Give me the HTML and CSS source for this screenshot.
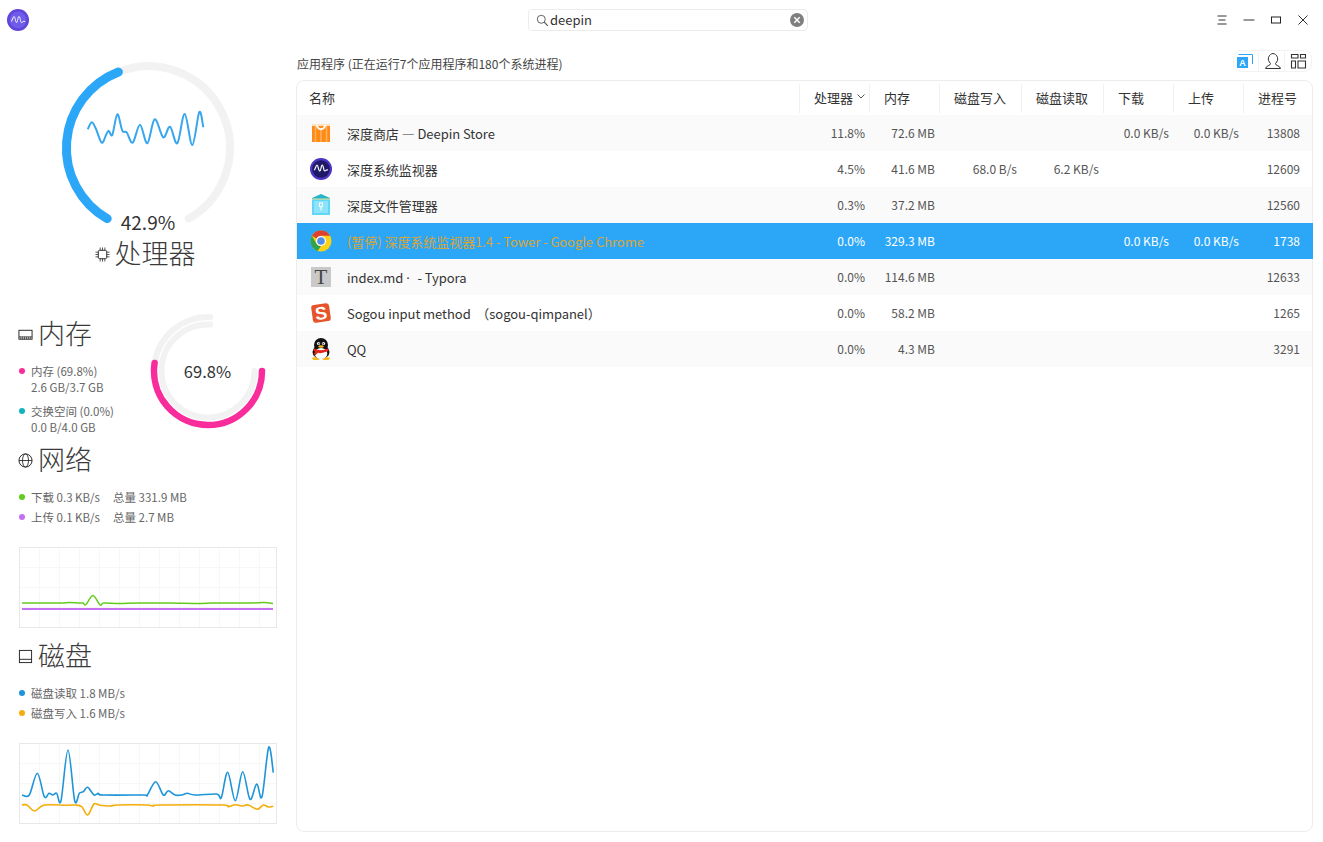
FILE: index.html
```html
<!DOCTYPE html>
<html lang="zh-CN">

<head>
    <meta charset="UTF-8">
    <meta name="viewport" content="width=device-width, initial-scale=1.0">
    <title>深度系统监视器</title>
    <link rel="stylesheet" href="styles.css">
</head>

<body>
    <header class="titlebar">
        <div class="titlebar-left">
            <svg class="app-logo" viewBox="0 0 22 22">
                <circle cx="11" cy="11" r="11" fill="#5f45dc" />
                <circle cx="11" cy="11" r="8.400" fill="#6f5ce8" />
                <path d="M4 12.500c1.500 0 1.700-5 3-5s1.400 6 2.600 6 1-6 2.400-6 1.200 6 2.500 6 1.400-2 3.500-1" fill="none" stroke="#fff" stroke-width="1" />
            </svg>
        </div>
        <div class="search-box">
            <svg class="search-icon" viewBox="0 0 14 14">
                <circle cx="5.700" cy="5.700" r="4.300" fill="none" stroke="#555" stroke-width="1" />
                <path d="M8.800 8.800l4 4" stroke="#555" stroke-width="1.200" />
            </svg>
            <span class="search-text">deepin</span>
            <svg class="search-clear" viewBox="0 0 14 14">
                <circle cx="7" cy="7" r="7" fill="#7f7f7f" />
                <path d="M4.300 4.300l5.400 5.400M9.700 4.300l-5.400 5.400" stroke="#fff" stroke-width="1.500" />
            </svg>
        </div>
        <div class="window-buttons">
            <svg class="win-btn" viewBox="0 0 12 12"><path d="M1.500 2h9M2.500 6h7M1.500 10h9" stroke="#333" stroke-width="1" fill="none" /></svg>
            <svg class="win-btn" viewBox="0 0 12 12"><path d="M0.500 6h11" stroke="#333" stroke-width="1" fill="none" /></svg>
            <svg class="win-btn" viewBox="0 0 12 12"><rect x="1.500" y="3" width="9" height="6" stroke="#222" stroke-width="1" fill="none" /></svg>
            <svg class="win-btn" viewBox="0 0 12 12"><path d="M1.500 1.500l9 9M10.500 1.500l-9 9" stroke="#333" stroke-width="1" fill="none" /></svg>
        </div>
    </header>

    <div class="main">
        <aside class="sidebar">
            <section class="cpu">
                <div class="cpu-gauge">
                    <svg class="cpu-svg" viewBox="0 50 296 180">
                        <path d="M118.400 72A81.500 81.500 0 0 1 188.750 218.600" fill="none" stroke="#f2f2f2" stroke-width="8" stroke-linecap="round" />
                        <path d="M107.250 218.600A81.500 81.500 0 0 1 118.400 72" fill="none" stroke="#2ca7f8" stroke-width="9" stroke-linecap="round" />
                        <path id="cpu-wave" fill="none" stroke="#38a6ee" stroke-width="2" />
                    </svg>
                    <div class="cpu-value">42.9%</div>
                </div>
                <h2 class="section-title cpu-title">
                    <svg class="title-icon" viewBox="0 0 16 16">
                        <rect x="3.500" y="3.500" width="9" height="9" rx="1.500" fill="none" stroke="#222" stroke-width="1" />
                        <path d="M0.500 5.500h3M0.500 8h3M0.500 10.500h3M12.500 5.500h3M12.500 8h3M12.500 10.500h3M5.500 0.500v3M8 0.500v3M10.500 0.500v3M5.500 12.500v3M8 12.500v3M10.500 12.500v3" stroke="#222" stroke-width="0.800" />
                    </svg>
                    <span>处理器</span>
                </h2>
            </section>

            <section class="memory">
                <div class="memory-info">
                    <h2 class="section-title">
                        <svg class="title-icon" viewBox="0 0 16 16">
                            <rect x="1" y="3.500" width="14" height="9.500" fill="none" stroke="#222" stroke-width="1" />
                            <path d="M1 10.500h14M3 10.500v2.500M5 10.500v2.500M7 10.500v2.500M9 10.500v2.500M11 10.500v2.500M13 10.500v2.500" stroke="#222" stroke-width="0.800" />
                        </svg>
                        <span>内存</span>
                    </h2>
                    <ul class="legend memory-legend">
                        <li><i class="dot dot-pink"></i><span>内存 (69.8%)<br>2.6 GB/3.7 GB</span></li>
                        <li><i class="dot dot-teal"></i><span>交换空间 (0.0%)<br>0.0 B/4.0 GB</span></li>
                    </ul>
                </div>
                <div class="memory-gauge">
                    <svg class="memory-svg" viewBox="0 0 130 120">
                        <path d="M69 7.040A54 54 0 0 0 13.600 53" fill="none" stroke="#f2f2f2" stroke-width="6" stroke-linecap="round" />
                        <path d="M69 14.540A46.500 46.500 0 0 0 20.500 61A46.500 46.500 0 0 0 113.500 61" fill="none" stroke="#f2f2f2" stroke-width="6" stroke-linecap="round" />
                        <path d="M13.600 53A54 54 0 0 0 67 115A54 54 0 0 0 121 61" fill="none" stroke="#f92c9c" stroke-width="6.500" stroke-linecap="round" />
                    </svg>
                    <div class="memory-value">69.8%</div>
                </div>
            </section>

            <section class="network">
                <h2 class="section-title">
                    <svg class="title-icon" viewBox="0 0 16 16">
                        <circle cx="8" cy="8" r="7" fill="none" stroke="#222" stroke-width="1" />
                        <ellipse cx="8" cy="8" rx="3.200" ry="7" fill="none" stroke="#222" stroke-width="0.900" />
                        <path d="M1 8h14" stroke="#222" stroke-width="0.900" />
                    </svg>
                    <span>网络</span>
                </h2>
                <ul class="legend speed-legend">
                    <li><i class="dot dot-green"></i><span class="speed">下载 0.3 KB/s</span><span>总量 331.9 MB</span></li>
                    <li><i class="dot dot-purple"></i><span class="speed">上传 0.1 KB/s</span><span>总量 2.7 MB</span></li>
                </ul>
                <div class="chart">
                    <svg class="chart-svg" viewBox="1 1 256 79">
                        <path d="M3 62H254" fill="none" stroke="#c56ff2" stroke-width="2.200" />
                        <path id="net-down" fill="none" stroke="#62cc1d" stroke-width="1.500" />
                    </svg>
                </div>
            </section>

            <section class="disk">
                <h2 class="section-title">
                    <svg class="title-icon" viewBox="0 0 16 16">
                        <rect x="1.500" y="1.500" width="13" height="13" fill="none" stroke="#222" stroke-width="1" />
                        <path d="M1.500 11h13" stroke="#222" stroke-width="1" />
                    </svg>
                    <span>磁盘</span>
                </h2>
                <ul class="legend speed-legend">
                    <li><i class="dot dot-blue"></i><span>磁盘读取 1.8 MB/s</span></li>
                    <li><i class="dot dot-orange"></i><span>磁盘写入 1.6 MB/s</span></li>
                </ul>
                <div class="chart">
                    <svg class="chart-svg" viewBox="1 1 256 79">
                        <path id="disk-write" fill="none" stroke="#f5ad0b" stroke-width="1.600" />
                        <path id="disk-read" fill="none" stroke="#1e94d9" stroke-width="1.600" />
                    </svg>
                </div>
            </section>
        </aside>

        <main class="content">
            <div class="content-head">
                <span class="summary">应用程序 (正在运行7个应用程序和180个系统进程)</span>
                <div class="tabs">
                    <button class="tab" type="button">
                        <svg viewBox="0 0 18 18">
                            <path d="M1.500 2.500h14v9.500" fill="none" stroke="#2ca7f8" stroke-width="1" />
                            <rect x="0" y="5" width="11" height="11" fill="#2ca7f8" />
                            <text class="tab-letter" x="5.500" y="14">A</text>
                        </svg>
                    </button>
                    <button class="tab" type="button">
                        <svg viewBox="0 0 18 18">
                            <path d="M2.500 16.500c.5-3 5-2.500 5-5-2-2-2.500-4-2-6 .6-2.500 3-4 4.500-4s3.900 1.500 4.500 4c.5 2 0 4-2 6 0 2.500 4.500 2 5 5z" fill="none" stroke="#333" stroke-width="1" />
                        </svg>
                    </button>
                    <button class="tab" type="button">
                        <svg viewBox="0 0 18 18">
                            <path d="M2.500 2.500H9V6H2.500zM11.500 2.500h5V6h-5zM2.500 9h4v7h-4zM9 9h7.500v7H9z" fill="none" stroke="#333" stroke-width="1.100" />
                        </svg>
                    </button>
                </div>
            </div>

            <div class="panel">
                <div class="row row-head">
                    <div class="cell-name"><span>名称</span></div>
                    <div class="head-cell"><span>处理器</span><svg class="sort-arrow" viewBox="0 0 8 5"><path d="M.5.5L4 4 7.500.5" fill="none" stroke="#555" stroke-width="1" /></svg></div>
                    <div class="head-cell"><span>内存</span></div>
                    <div class="head-cell"><span>磁盘写入</span></div>
                    <div class="head-cell"><span>磁盘读取</span></div>
                    <div class="head-cell"><span>下载</span></div>
                    <div class="head-cell"><span>上传</span></div>
                    <div class="head-cell"><span>进程号</span></div>
                </div>

                <div class="row row-alt">
                    <div class="cell-name">
                        <svg class="app-icon" viewBox="0 0 24 24">
                            <rect x="3" y="3" width="18" height="18" fill="#ff8a14" />
                            <path d="M6.500 3v18M12 8v13M17.500 3v18" stroke="#ffb366" stroke-width="1.500" />
                            <rect x="3" y="3" width="18" height="2" fill="#ffe2c0" />
                            <path d="M8 4c0 5.500 8 5.500 8 0" fill="none" stroke="#fff" stroke-width="2" />
                        </svg>
                        <span>深度商店 — Deepin Store</span>
                    </div>
                    <div class="cell">11.8%</div><div class="cell">72.6 MB</div><div class="cell"></div><div class="cell"></div><div class="cell">0.0 KB/s</div><div class="cell">0.0 KB/s</div><div class="cell cell-pid">13808</div>
                </div>

                <div class="row">
                    <div class="cell-name">
                        <svg class="app-icon" viewBox="0 0 24 24">
                            <circle cx="12" cy="12" r="11" fill="#4a35c4" />
                            <circle cx="12" cy="12" r="8.800" fill="#1e1a66" />
                            <path d="M5 13c1.500 0 1.800-5 3-5s1.400 6 2.800 6 1-6 2.400-6 1.200 6 2.500 6 1.500-2 3.300-1" fill="none" stroke="#fff" stroke-width="1.200" />
                        </svg>
                        <span>深度系统监视器</span>
                    </div>
                    <div class="cell">4.5%</div><div class="cell">41.6 MB</div><div class="cell">68.0 B/s</div><div class="cell">6.2 KB/s</div><div class="cell"></div><div class="cell"></div><div class="cell cell-pid">12609</div>
                </div>

                <div class="row row-alt">
                    <div class="cell-name">
                        <svg class="app-icon" viewBox="0 0 24 24">
                            <path d="M3 5l9-4 9 4v3H3z" fill="#25b4cc" />
                            <rect x="3" y="6" width="18" height="16" fill="#62d6f5" />
                            <rect x="5" y="8" width="14" height="12" fill="#8ce4fb" />
                            <path d="M3 6h18" stroke="#f2e08a" stroke-width="1" />
                            <rect x="10.500" y="10" width="3" height="3.500" fill="none" stroke="#fff" stroke-width="1" />
                            <path d="M12 13.500v4" stroke="#fff" stroke-width="1" />
                        </svg>
                        <span>深度文件管理器</span>
                    </div>
                    <div class="cell">0.3%</div><div class="cell">37.2 MB</div><div class="cell"></div><div class="cell"></div><div class="cell"></div><div class="cell"></div><div class="cell cell-pid">12560</div>
                </div>

                <div class="row row-selected">
                    <div class="cell-name">
                        <svg class="app-icon" viewBox="0 0 24 24">
                            <circle cx="12" cy="12" r="10.500" fill="#fcd116" />
                            <path d="M12 1.500a10.500 10.500 0 0 1 9.100 5.250H12a5.250 5.250 0 0 0-4.550 2.630L2.900 6.750A10.500 10.500 0 0 1 12 1.500z" fill="#e0402f" />
                            <path d="M2.900 6.750l4.550 7.880A5.250 5.250 0 0 0 12 17.250l-3.500 4.650A10.500 10.500 0 0 1 2.900 6.750z" fill="#2fa34f" />
                            <circle cx="12" cy="12" r="5" fill="#fff" />
                            <circle cx="12" cy="12" r="3.800" fill="#4d8fea" />
                        </svg>
                        <span class="paused">(暂停) 深度系统监视器1.4 - Tower - Google Chrome</span>
                    </div>
                    <div class="cell">0.0%</div><div class="cell">329.3 MB</div><div class="cell"></div><div class="cell"></div><div class="cell">0.0 KB/s</div><div class="cell">0.0 KB/s</div><div class="cell cell-pid">1738</div>
                </div>

                <div class="row row-alt">
                    <div class="cell-name">
                        <svg class="app-icon" viewBox="0 0 24 24">
                            <rect x="2" y="2" width="20" height="20" fill="#c9c9c9" />
                            <text class="typora-letter" x="12" y="19">T</text>
                        </svg>
                        <span>index.md <span class="mid-dot">·</span>&nbsp; - Typora</span>
                    </div>
                    <div class="cell">0.0%</div><div class="cell">114.6 MB</div><div class="cell"></div><div class="cell"></div><div class="cell"></div><div class="cell"></div><div class="cell cell-pid">12633</div>
                </div>

                <div class="row">
                    <div class="cell-name">
                        <svg class="app-icon" viewBox="0 0 24 24">
                            <rect x="3" y="3" width="18" height="18" rx="3" fill="#e6542a" transform="rotate(-8 12 12)" />
                            <text class="sogou-letter" x="12" y="18.500" transform="rotate(-8 12 12)">S</text>
                        </svg>
                        <span>Sogou input method &nbsp;（sogou-qimpanel）</span>
                    </div>
                    <div class="cell">0.0%</div><div class="cell">58.2 MB</div><div class="cell"></div><div class="cell"></div><div class="cell"></div><div class="cell"></div><div class="cell cell-pid">1265</div>
                </div>

                <div class="row row-alt">
                    <div class="cell-name">
                        <svg class="app-icon" viewBox="0 0 24 24">
                            <ellipse cx="7" cy="21.500" rx="3.800" ry="1.500" fill="#f7b718" />
                            <ellipse cx="17" cy="21.500" rx="3.800" ry="1.500" fill="#f7b718" />
                            <ellipse cx="12" cy="15" rx="8.500" ry="6.800" fill="#111" />
                            <ellipse cx="12" cy="8" rx="7" ry="7" fill="#111" />
                            <ellipse cx="12" cy="16.500" rx="6.300" ry="5.500" fill="#fff" />
                            <circle cx="9.500" cy="6.500" r="1.600" fill="#fff" />
                            <circle cx="14.500" cy="6.500" r="1.600" fill="#fff" />
                            <circle cx="9.800" cy="6.800" r=".7" fill="#111" />
                            <circle cx="14.200" cy="6.800" r=".7" fill="#111" />
                            <ellipse cx="12" cy="9.500" rx="2.800" ry="1.200" fill="#f7b718" />
                            <path d="M5 11.500Q12 15 19 11.500l.5 2.500Q12 17 9 15.800L5.500 19l.5-4.500-1.500-.5z" fill="#e3261b" />
                        </svg>
                        <span>QQ</span>
                    </div>
                    <div class="cell">0.0%</div><div class="cell">4.3 MB</div><div class="cell"></div><div class="cell"></div><div class="cell"></div><div class="cell"></div><div class="cell cell-pid">3291</div>
                </div>
            </div>
        </main>
    </div>

    <script src="script.js"></script>
</body>

</html>
```

FILE: styles.css
```css
* {
    box-sizing: border-box;
}

body {
    margin: 0;
    height: 842px;
    overflow: hidden;
    background-color: white;
    color: #303030;
    font-family: "Noto Sans CJK SC", "Noto Sans", sans-serif;
    font-size: 13px;
}

/* Barra de titulo */
.titlebar {
    display: grid;
    grid-template-columns: 528px 280px 1fr;
    height: 50px;
    padding-top: 9px;
}

.titlebar-left {
    padding-left: 7px;
}

.app-logo {
    display: block;
    width: 22px;
    height: 22px;
}

.search-box {
    display: flex;
    align-items: center;
    height: 22px;
    padding: 0 3px 0 7px;
    border: 1px solid #ececec;
    border-radius: 4px;
}

.search-icon {
    width: 13px;
    height: 13px;
    margin-right: 1px;
}

.search-text {
    flex: 1;
    padding-bottom: 2px;
    font-size: 13px;
    color: #333;
}

.search-clear {
    width: 14px;
    height: 14px;
}

.window-buttons {
    display: flex;
    justify-content: flex-end;
    gap: 15px;
    padding: 5px 14px 0 0;
}

.win-btn {
    width: 12px;
    height: 12px;
}

/* Cuerpo */
.main {
    display: flex;
    height: 792px;
}

.sidebar {
    flex: 0 0 296px;
}

.content {
    flex: 1;
    padding-right: 10px;
}

.section-title {
    display: flex;
    align-items: center;
    gap: 5px;
    height: 36px;
    margin: 0;
    font-size: 27px;
    font-weight: 300;
    color: #3a3a3a;
}

.section-title span {
    padding-bottom: 4px;
}

.title-icon {
    width: 15px;
    height: 15px;
}

/* Procesador */
.cpu-gauge {
    position: relative;
    height: 186px;
}

.cpu-svg {
    display: block;
    width: 296px;
    height: 180px;
}

.cpu-value {
    position: absolute;
    left: 0;
    right: 0;
    top: 158px;
    text-align: center;
    font-size: 19px;
    line-height: 28px;
    color: #333;
}

.cpu-title {
    justify-content: center;
    padding-right: 6px;
}

/* Memoria */
.memory {
    display: flex;
    height: 126px;
    margin-top: 44px;
    padding-left: 18px;
}

.memory-info {
    flex: 0 0 123px;
}

.memory-gauge {
    position: relative;
    width: 130px;
    height: 120px;
    margin-top: -6px;
}

.memory-svg {
    display: block;
    width: 130px;
    height: 120px;
}

.memory-value {
    position: absolute;
    left: 0;
    right: -3px;
    top: 49px;
    text-align: center;
    font-size: 16.500px;
    line-height: 24px;
    color: #333;
}

.legend {
    margin: 0;
    padding: 0;
    list-style: none;
    font-size: 11.500px;
    color: #666;
}

.legend li {
    display: flex;
    white-space: nowrap;
}

.memory-legend {
    margin-top: 11px;
    line-height: 16px;
}

.memory-legend li {
    margin-bottom: 8px;
}

.speed-legend {
    margin-top: 9px;
    line-height: 20px;
}

.dot {
    flex: 0 0 6px;
    width: 6px;
    height: 6px;
    margin: 5px 6px 0 1px;
    border-radius: 50%;
}

.speed-legend .dot {
    margin-top: 7px;
}

.dot-pink { background-color: #f92c9c; }
.dot-teal { background-color: #10b4c0; }
.dot-green { background-color: #62cc1d; }
.dot-purple { background-color: #c56ff2; }
.dot-blue { background-color: #1e94d9; }
.dot-orange { background-color: #f5ad0b; }

.speed {
    width: 82px;
}

/* Red y disco */
.network,
.disk {
    padding-left: 18px;
}

.disk {
    margin-top: 10px;
}

.chart {
    width: 258px;
    height: 81px;
    margin: 20px 0 0 1px;
    border: 1px solid #e8e8e8;
    background-color: white;
    background-image:
        linear-gradient(to right, #f7f7f7 1px, transparent 1px),
        linear-gradient(to bottom, #f7f7f7 1px, transparent 1px);
    background-size: 20px 20px;
    background-position: 19px 19px;
}

.chart-svg {
    display: block;
    width: 256px;
    height: 79px;
}

/* Tabla de procesos */
.content-head {
    display: flex;
    align-items: center;
    justify-content: space-between;
    height: 30px;
    padding-left: 1px;
}

.summary {
    padding-bottom: 4px;
    font-size: 12px;
    color: #444;
}

.tabs {
    display: flex;
    height: 22px;
    border: 1px solid #f3f3f3;
    border-radius: 8px;
    margin-right: 1px;
    margin-top: -8px;
}

.tab {
    display: flex;
    align-items: center;
    justify-content: center;
    width: 26px;
    padding: 0;
    border: 0;
    border-right: 1px solid #f3f3f3;
    background: none;
}

.tab:first-child {
    width: 25px;
}

.tab:last-child {
    border-right: 0;
}

.tab svg {
    width: 18px;
    height: 18px;
    overflow: visible;
}

.tab-letter {
    fill: white;
    font-size: 9px;
    font-weight: 700;
    text-anchor: middle;
}

.panel {
    height: 752px;
    border: 1px solid #ededed;
    border-radius: 8px;
}

.row {
    display: grid;
    grid-template-columns: 502px 70px 70px 82px 82px 70px 70px 1fr;
    align-items: center;
    height: 36px;
    font-size: 12px;
    color: #555;
}

.row-alt {
    background-color: #fafafa;
}

.row-selected {
    background-color: #2ca7f8;
    box-shadow: 1px 0 0 #2ca7f8;
    color: white;
}

.row-head {
    height: 34px;
    font-size: 13px;
    color: #333;
}

.row-head .cell-name > span {
    padding-bottom: 2px;
}

.head-cell {
    display: flex;
    align-items: center;
    height: 29px;
    padding-left: 14px;
    border-left: 1px solid #f0f0f0;
}

.head-cell span {
    padding-bottom: 2px;
}

.sort-arrow {
    width: 8px;
    height: 5px;
    margin: -3px 0 0 4px;
}

.cell-name {
    display: flex;
    align-items: center;
    gap: 14px;
    padding-left: 12px;
    font-size: 13px;
    letter-spacing: -0.05px;
    color: #333;
    white-space: nowrap;
}

.app-icon {
    width: 24px;
    height: 24px;
}

.paused {
    color: #d9a534;
}

.mid-dot {
    padding-right: 2px;
    font-family: "Noto Sans", sans-serif;
}

.cell {
    padding: 0 4px 2px 0;
    text-align: right;
}

.cell-pid {
    padding-right: 12px;
}

.typora-letter {
    fill: #444;
    font-family: "Liberation Serif", serif;
    font-size: 21px;
    text-anchor: middle;
}

.sogou-letter {
    fill: white;
    font-family: "Liberation Sans", sans-serif;
    font-size: 18px;
    font-weight: 700;
    text-anchor: middle;
}
```

FILE: script.js
```js
// Dibuja las curvas suavizadas de los graficos
const series = {
    'cpu-wave': [[87.7,129.3],[91.7,122.3],[95.7,128.3],[101.7,142.7],[106,135],[108.7,130.7],[112.3,135],[117.3,114.3],[122.3,130.7],[126.7,132.3],[132.7,142.7],[140,124.7],[147.3,143.3],[154.7,119.3],[163.3,137.3],[170,126.7],[177.3,143.3],[184.7,114],[192.3,145],[199.3,112],[203.3,127.3]],
    'net-down': [[3,56],[40,56],[50,55.5],[60,56],[64,56],[67,57.5],[74,48.5],[81,58],[85,56],[100,56.5],[120,56],[150,56],[180,56.5],[195,56],[230,56],[245,55.5],[254,56.5]],
    'disk-read': [[3,52],[10.3,52],[18.3,30.3],[25.3,53.7],[30,50.3],[33.7,52],[37.7,50.3],[42,57.7],[49,7],[55.7,57.7],[60.3,50.3],[64.3,48.7],[68.7,44.3],[75,52],[79.3,50.3],[84.3,52],[124.3,52],[128.3,52],[136.7,38.7],[144.3,52],[149.3,47.7],[156,52],[162.7,52],[168.3,50.3],[176,52],[197.7,51],[202.3,54.7],[208.7,29.3],[216.3,57.7],[223.7,28.7],[231,56.3],[237.7,41],[243,53.7],[249.7,4.3],[254.3,29.7]],
    'disk-write': [[3,62],[8,62],[15.7,68],[25.3,62],[47.7,62.3],[56,62],[62.7,63.7],[68.7,72],[75,61],[81,62.3],[91,63],[99.3,62],[127.7,62],[134.3,63],[141,62],[202.7,62],[209.3,63.7],[216,61.7],[222.7,63],[229.3,62],[238.3,66.3],[244.3,62],[249.3,64],[254.3,63.3]]
};

function smoothPath(points) {
    let d = 'M' + points[0][0] + ' ' + points[0][1];
    for (let i = 0; i < points.length - 1; i++) {
        const p0 = points[Math.max(i - 1, 0)];
        const p1 = points[i];
        const p2 = points[i + 1];
        const p3 = points[Math.min(i + 2, points.length - 1)];
        const c1x = p1[0] + (p2[0] - p0[0]) / 6;
        const c1y = p1[1] + (p2[1] - p0[1]) / 6;
        const c2x = p2[0] - (p3[0] - p1[0]) / 6;
        const c2y = p2[1] - (p3[1] - p1[1]) / 6;
        d += 'C' + c1x + ' ' + c1y + ' ' + c2x + ' ' + c2y + ' ' + p2[0] + ' ' + p2[1];
    }
    return d;
}

Object.keys(series).forEach((id) => {
    document.getElementById(id).setAttribute('d', smoothPath(series[id]));
});
```
